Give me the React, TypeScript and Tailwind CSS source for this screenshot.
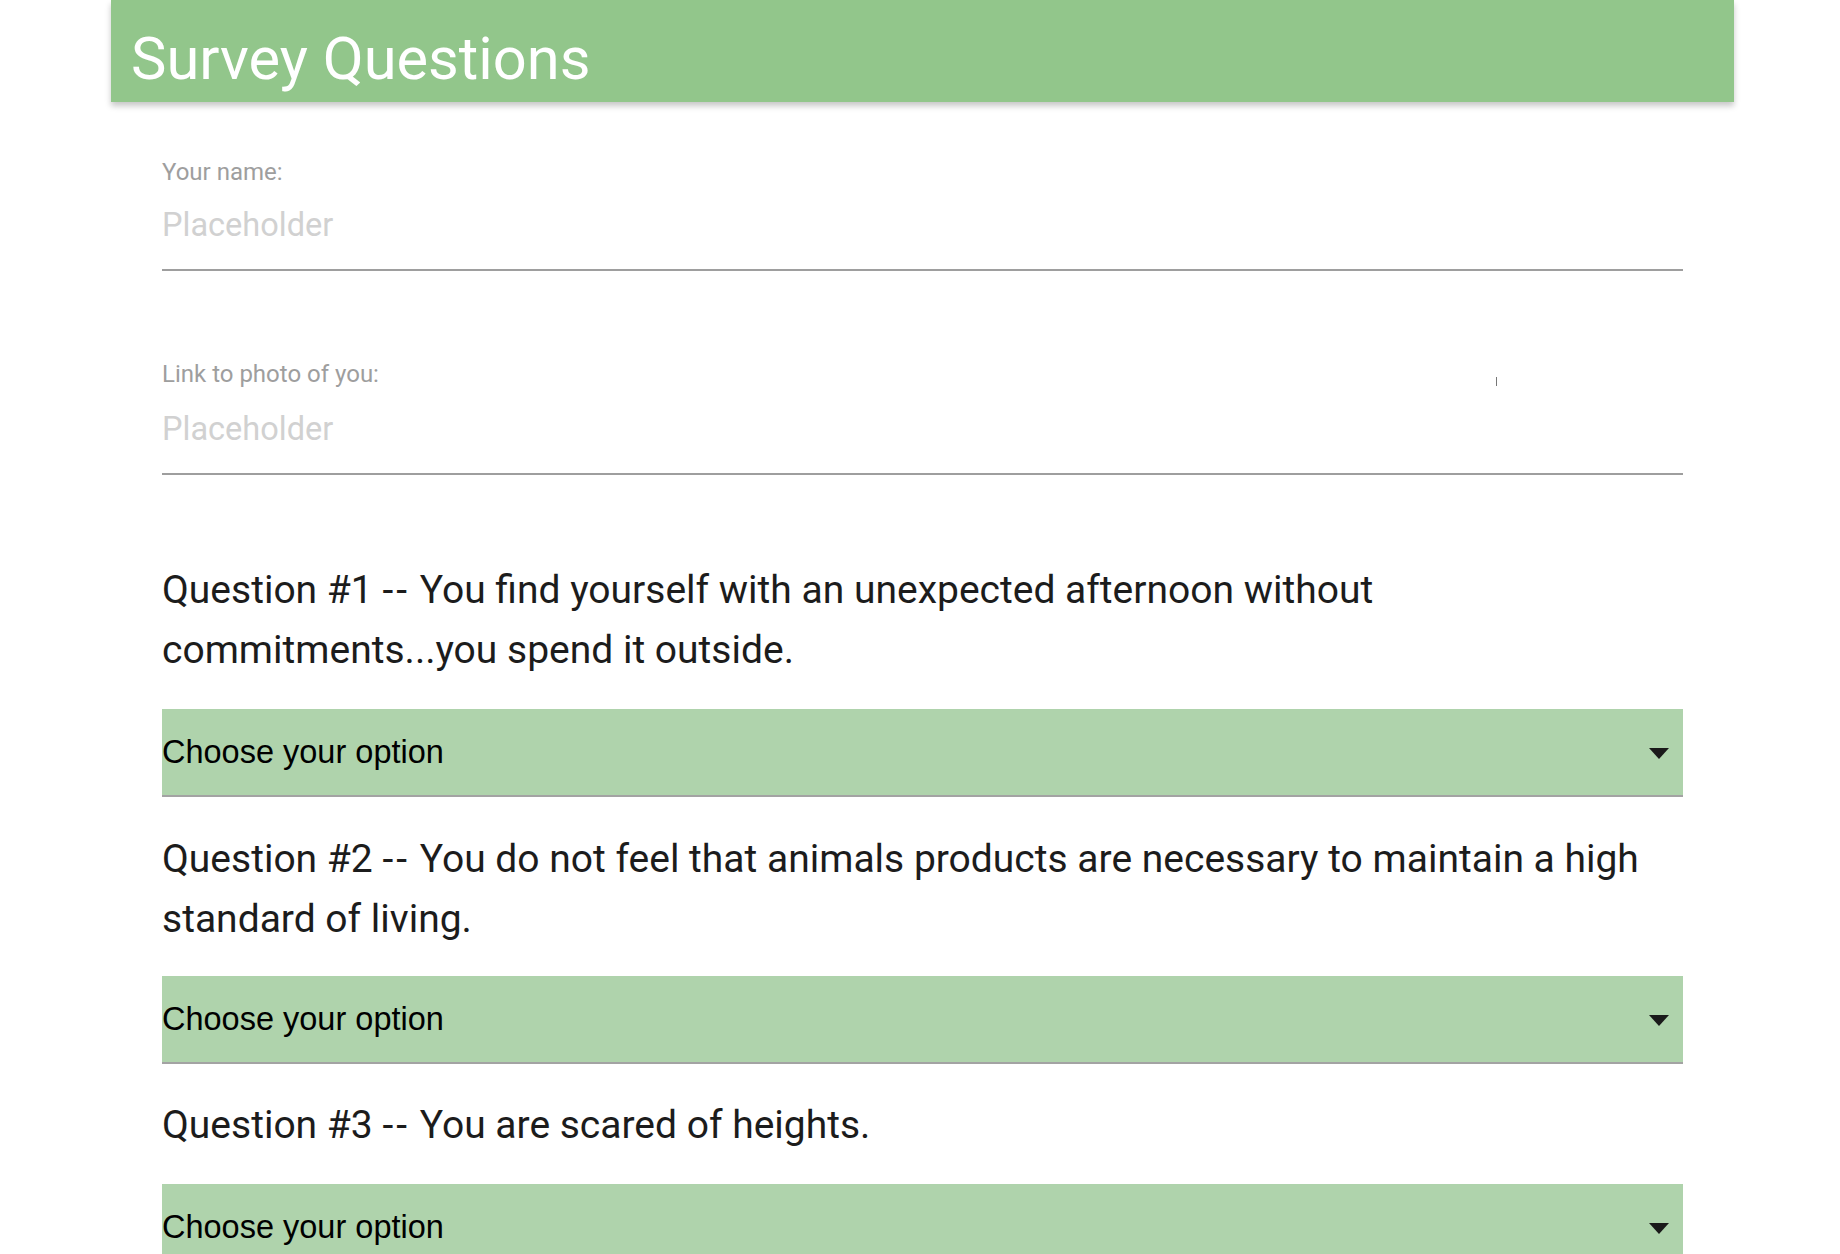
import { ChangeEvent, useState } from 'react'

const questions = [
  { id: 1, text: 'You find yourself with an unexpected afternoon without commitments...you spend it outside.', mt: 'mt-[85px]', selMt: 'mt-[29px]' },
  { id: 2, text: 'You do not feel that animals products are necessary to maintain a high standard of living.', mt: 'mt-[32px]', selMt: 'mt-[27px]' },
  { id: 3, text: 'You are scared of heights.', mt: 'mt-[31px]', selMt: 'mt-[29px]' },
]

function Field({ label, value, onChange, className, inputMt }: { label: string; value: string; onChange: (e: ChangeEvent<HTMLInputElement>) => void; className: string; inputMt: string }) {
  return (
    <div className={className}>
      <label className="block text-[24px] leading-[24px] text-[#9e9e9e]">{label}</label>
      <input
        type="text"
        value={value}
        onChange={onChange}
        placeholder="Placeholder"
        className={`${inputMt} block h-[62px] w-full border-b-2 border-[#9e9e9e] bg-transparent pb-[28px] text-[32.5px] leading-[32px] text-[#212121] outline-none placeholder:text-[#d1d1d1]`}
      />
    </div>
  )
}

export default function App() {
  const [name, setName] = useState('')
  const [photo, setPhoto] = useState('')
  const [answers, setAnswers] = useState<Record<number, string>>({})

  return (
    <div className="min-h-[1254px] bg-white font-['Roboto',sans-serif]">
      <div className="ml-[111px] w-[1623px]">
        <div className="h-[102px] bg-[#92c68b] pl-[20px] shadow-[0_4px_6px_rgba(0,0,0,0.22)]">
          <h1 className="pt-[30px] text-[59.6px] leading-[59px] font-normal text-white">Survey Questions</h1>
        </div>

        <form className="px-[51px] pb-[40px]" onSubmit={e => e.preventDefault()}>
          <Field label="Your name:" value={name} onChange={e => setName(e.target.value)} className="mt-[58px]" inputMt="mt-[25px]" />
          <div className="relative">
            <Field label="Link to photo of you:" value={photo} onChange={e => setPhoto(e.target.value)} className="mt-[91px]" inputMt="mt-[27px]" />
            {/* mouse cursor left in the screenshot */}
            <div className="pointer-events-none absolute left-[1334px] top-[15px] h-[9px] w-[1px] bg-[#777]" />
          </div>

          {questions.map(q => (
            <div key={q.id}>
              <p className={`${q.mt} text-[39px] leading-[60px] text-[#1c1c1c]`}>
                Question #{q.id} <span className="tracking-[3px]">--</span> {q.text}
              </p>
              <div className={`relative ${q.selMt}`}>
                <select
                  value={answers[q.id] || ''}
                  onChange={e => setAnswers({ ...answers, [q.id]: e.target.value })}
                  className="block h-[88px] w-full cursor-pointer appearance-none rounded-none border-b-2 border-[#a3a3a3] bg-[#afd3ac] pl-0 font-['Liberation_Sans',Arial,sans-serif] text-[32.5px] text-black outline-none"
                >
                  <option value="" disabled>Choose your option</option>
                  <option value="1">Strongly Disagree</option>
                  <option value="2">Disagree</option>
                  <option value="3">Neutral</option>
                  <option value="4">Agree</option>
                  <option value="5">Strongly Agree</option>
                </select>
                <svg className="pointer-events-none absolute right-[14px] top-[39px]" width="20" height="11" viewBox="0 0 20 11">
                  <path d="M0 0 L20 0 L10 11 Z" fill="#1a1a1a" />
                </svg>
              </div>
            </div>
          ))}
        </form>
      </div>
    </div>
  )
}
